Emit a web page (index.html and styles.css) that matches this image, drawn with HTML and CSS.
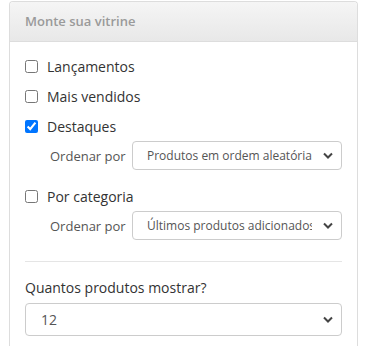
FILE: index.html
```html
<!doctype html>
<html lang="pt-br">
<head>
    <meta charset="UTF-8">
    <meta name="viewport" content="width=device-width, initial-scale=1.0">
    <title>Monte sua vitrine</title>
    <link rel="stylesheet" href="styles.css">
</head>
<body>
<div class="painel">
    <div class="painel-titulo">Monte sua vitrine</div>
    <div class="painel-corpo">
        <label class="opcao"><input type="checkbox"> Lançamentos</label>
        <label class="opcao"><input type="checkbox"> Mais vendidos</label>
        <label class="opcao"><input type="checkbox" checked> Destaques</label>
        <div class="ordem">
            <span>Ordenar por</span>
            <select>
                <option>Produtos em ordem aleatória</option>
            </select>
        </div>
        <label class="opcao opcao-cat"><input type="checkbox"> Por categoria</label>
        <div class="ordem">
            <span>Ordenar por</span>
            <select>
                <option>Últimos produtos adicionados</option>
            </select>
        </div>
        <hr>
        <p class="pergunta">Quantos produtos mostrar?</p>
        <select class="select-grande">
            <option>12</option>
        </select>
    </div>
</div>
</body>
</html>
```
FILE: styles.css
```css
html, body {
    height: 100%;
    overflow: hidden;
}
body {
    font-family: "Open Sans", Arial, sans-serif;
    margin: 0;
    background-color: #ffffff;
}
.painel {
    margin: 1px 12px 0 9px;
    border: 1px solid #dddddd;
    border-bottom: none;
    border-radius: 4px 4px 0 0;
    height: calc(100% - 2px);
    box-sizing: border-box;
}
.painel-titulo {
    height: 39px;
    line-height: 39px;
    padding-left: 15px;
    font-size: 13px;
    font-weight: 600;
    color: #9a9a9a;
    background: linear-gradient(#f5f5f5, #e8e8e8);
    border-bottom: 1px solid #dddddd;
    border-radius: 4px 4px 0 0;
}
.painel-corpo {
    padding: 9px 15px 0 15px;
    display: flex;
    flex-direction: column;
}
.opcao {
    display: flex;
    align-items: center;
    gap: 9px;
    height: 30px;
    font-size: 14px;
    color: #333333;
}
.opcao input {
    margin: 0;
    width: 13px;
    height: 13px;
}
.opcao-cat {
    margin-top: 11px;
}
.ordem {
    display: flex;
    align-items: center;
    padding-left: 25px;
    font-size: 13px;
    color: #555555;
}
.ordem span {
    width: 82px;
}
select {
    appearance: none;
    font-family: "Open Sans", Arial, sans-serif;
    font-size: 12px;
    color: #555555;
    background: #ffffff url("data:image/svg+xml,%3Csvg xmlns='http://www.w3.org/2000/svg' width='10' height='7' viewBox='0 0 10 7'%3E%3Cpath d='M1 1.5l4 4 4-4' fill='none' stroke='%23444' stroke-width='2'/%3E%3C/svg%3E") no-repeat right 8px center;
    border: 1px solid #cccccc;
    border-radius: 4px;
    padding: 0 29px 0 14px;
    height: 29px;
}
.ordem select {
    flex: 1;
    width: 0;
}
hr {
    border: none;
    border-top: 1px solid #e5e5e5;
    margin: 21px 0 16px 0;
}
.pergunta {
    margin: 0 0 5px 0;
    font-size: 14px;
    color: #333333;
    line-height: 20px;
}
.select-grande {
    height: 33px;
    padding-left: 15px;
    font-size: 14px;
}
```
